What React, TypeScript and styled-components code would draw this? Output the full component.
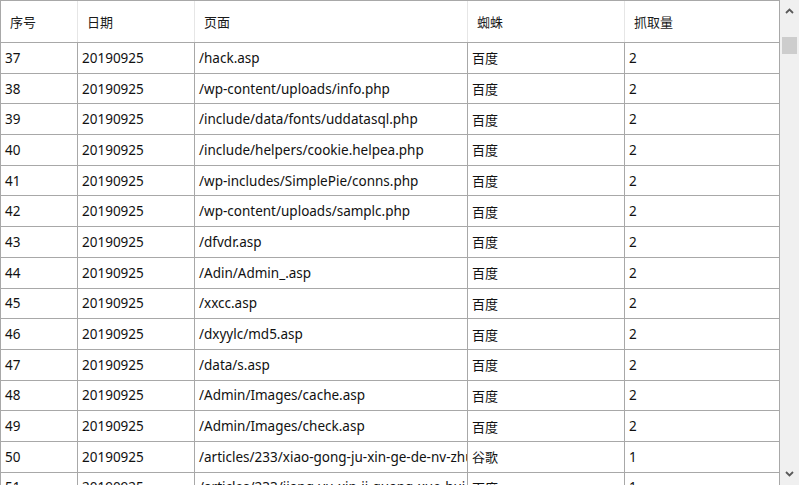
import React from "react";
import styled, { createGlobalStyle } from "styled-components";

const Global = createGlobalStyle`
  html, body { margin: 0; padding: 0; background: #ffffff; }
  body { font-family: "Noto Sans", "Noto Sans CJK SC", sans-serif; }
`;

const Frame = styled.div`
  width: 799px;
  height: 485px;
  display: flex;
  overflow: hidden;
  background: #fff;
`;

const TableArea = styled.div`
  width: 780px;
  flex: none;
  border-left: 1px solid #a8a8a8;
  border-top: 1px solid #a8a8a8;
  box-sizing: border-box;
  overflow: hidden;
`;

const cols = "77px 117px 273px 157px 155px";

const HeaderRow = styled.div`
  display: grid;
  grid-template-columns: ${cols};
  height: 42px;
  border-bottom: 1px solid #a8a8a8;
  box-sizing: border-box;
`;

const HeadCell = styled.div`
  display: flex;
  align-items: center;
  padding-left: 9px;
  border-right: 1px solid #e6e6e6;
  font-size: 13px;
  color: #1a1a1a;
  font-family: "Noto Sans CJK SC", sans-serif;
  &:last-child { border-right: 1px solid #a8a8a8; }
`;

const Row = styled.div`
  display: grid;
  grid-template-columns: ${cols};
  height: 30.7px;
  border-bottom: 1px solid #a8a8a8;
  box-sizing: border-box;
`;

const Cell = styled.div<{ $cjk?: boolean }>`
  display: flex;
  align-items: center;
  padding-left: 4px;
  border-right: 1px solid #a8a8a8;
  font-size: ${(p) => (p.$cjk ? "13px" : "13.5px")};
  color: #111;
  white-space: nowrap;
  overflow: hidden;
  font-family: ${(p) =>
    p.$cjk ? `"Noto Sans CJK SC", sans-serif` : `"Noto Sans", "Noto Sans CJK SC", sans-serif`};
`;

const Scrollbar = styled.div`
  width: 19px;
  flex: none;
  background: #f0f0f0;
  display: flex;
  flex-direction: column;
  align-items: center;
`;

const Arrow = styled.div`
  height: 22px;
  width: 100%;
  display: flex;
  align-items: center;
  justify-content: center;
`;

const Track = styled.div`
  flex: 1;
  width: 100%;
  padding: 15px 2px 0 2px;
  box-sizing: border-box;
`;

const Thumb = styled.div`
  height: 17px;
  background: #cdcdcd;
`;

const rows: [number, string, string, string][] = [
  [37, "/hack.asp", "百度", "2"],
  [38, "/wp-content/uploads/info.php", "百度", "2"],
  [39, "/include/data/fonts/uddatasql.php", "百度", "2"],
  [40, "/include/helpers/cookie.helpea.php", "百度", "2"],
  [41, "/wp-includes/SimplePie/conns.php", "百度", "2"],
  [42, "/wp-content/uploads/samplc.php", "百度", "2"],
  [43, "/dfvdr.asp", "百度", "2"],
  [44, "/Adin/Admin_.asp", "百度", "2"],
  [45, "/xxcc.asp", "百度", "2"],
  [46, "/dxyylc/md5.asp", "百度", "2"],
  [47, "/data/s.asp", "百度", "2"],
  [48, "/Admin/Images/cache.asp", "百度", "2"],
  [49, "/Admin/Images/check.asp", "百度", "2"],
  [50, "/articles/233/xiao-gong-ju-xin-ge-de-nv-zhu-jiao.html", "谷歌", "1"],
  [51, "/articles/233/jiang-yu-xin-ji-guang-xue-hui.html", "百度", "1"],
];

const Chevron = ({ up }: { up?: boolean }) => (
  <svg width="9" height="6" viewBox="0 0 9 6">
    <path
      d={up ? "M1 5 L4.5 1.5 L8 5" : "M1 1 L4.5 4.5 L8 1"}
      fill="none"
      stroke="#5a5a5a"
      strokeWidth="1.8"
    />
  </svg>
);

export default function App() {
  return (
    <>
      <Global />
      <Frame>
        <TableArea>
          <HeaderRow>
            <HeadCell>序号</HeadCell>
            <HeadCell>日期</HeadCell>
            <HeadCell>页面</HeadCell>
            <HeadCell>蜘蛛</HeadCell>
            <HeadCell>抓取量</HeadCell>
          </HeaderRow>
          {rows.map(([n, page, spider, count]) => (
            <Row key={n}>
              <Cell>{n}</Cell>
              <Cell>20190925</Cell>
              <Cell>{page}</Cell>
              <Cell $cjk>{spider}</Cell>
              <Cell>{count}</Cell>
            </Row>
          ))}
        </TableArea>
        <Scrollbar>
          <Arrow>
            <Chevron up />
          </Arrow>
          <Track>
            <Thumb />
          </Track>
          <Arrow>
            <Chevron />
          </Arrow>
        </Scrollbar>
      </Frame>
    </>
  );
}
